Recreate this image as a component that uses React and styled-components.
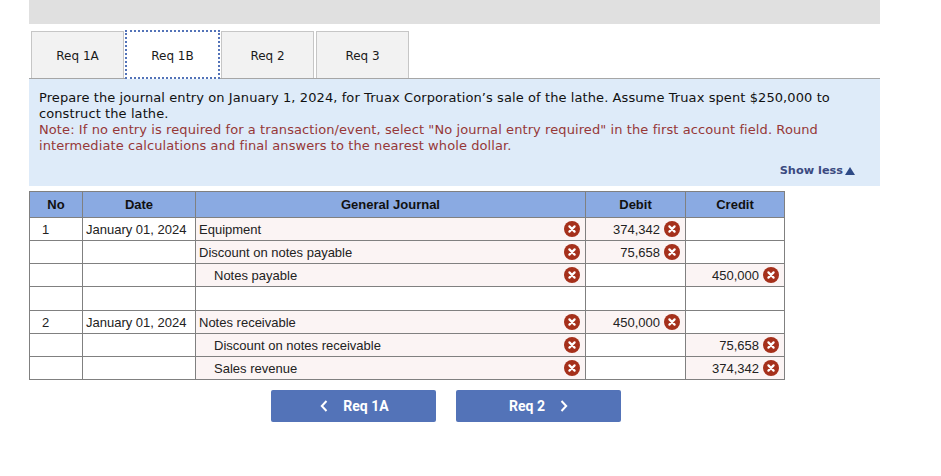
import React from "react"
import styled, { createGlobalStyle } from "styled-components"

const GlobalStyle = createGlobalStyle`
  html, body {
    margin: 0;
    padding: 0;
    background: #fff;
  }
`

const tabs = ["Req 1A", "Req 1B", "Req 2", "Req 3"]

const rows = [
  { no: "1", date: "January 01, 2024", account: "Equipment", debit: "374,342" },
  { account: "Discount on notes payable", debit: "75,658" },
  { account: "Notes payable", indent: true, credit: "450,000" },
  { blank: true },
  { no: "2", date: "January 01, 2024", account: "Notes receivable", debit: "450,000" },
  { account: "Discount on notes receivable", indent: true, credit: "75,658" },
  { account: "Sales revenue", indent: true, credit: "374,342" },
]

const CrossIcon = () => (
  <Cross viewBox="0 0 16 16" aria-hidden="true">
    <circle cx="8" cy="8" r="8" fill="#a5301b" />
    <path d="M5.4 5.4l5.2 5.2M10.6 5.4l-5.2 5.2" stroke="#fff" strokeWidth="2.2" strokeLinecap="round" />
  </Cross>
)

const Amount = ({ value }) => (
  <AmountCell $filled={!!value}>
    {value && (
      <AmountInner>
        {value}
        <CrossIcon />
      </AmountInner>
    )}
  </AmountCell>
)

export default function App() {
  return (
    <Page>
      <GlobalStyle />
      <TopBar />
      <TabRow>
        {tabs.map((tab) => (
          <Tab key={tab} $active={tab === "Req 1B"}>
            {tab}
          </Tab>
        ))}
      </TabRow>
      <Panel>
        <Prompt>
          Prepare the journal entry on January 1, 2024, for Truax Corporation’s sale of the lathe. Assume Truax spent
          $250,000 to construct the lathe.
        </Prompt>
        <Note>
          Note: If no entry is required for a transaction/event, select "No journal entry required" in the first account
          field. Round intermediate calculations and final answers to the nearest whole dollar.
        </Note>
        <ShowLess>
          Show less
          <Triangle viewBox="0 0 10 8" aria-hidden="true">
            <path d="M5 0l5 8H0z" fill="#2e4a86" />
          </Triangle>
        </ShowLess>
      </Panel>
      <Journal>
        <colgroup>
          <col width="53" />
          <col width="113" />
          <col width="390" />
          <col width="100" />
          <col width="99" />
        </colgroup>
        <thead>
          <tr>
            <Head>No</Head>
            <Head>Date</Head>
            <Head>General Journal</Head>
            <Head>Debit</Head>
            <Head>Credit</Head>
          </tr>
        </thead>
        <tbody>
          {rows.map((row, i) => (
            <Row key={i} $blank={row.blank}>
              <NoCell>{row.no}</NoCell>
              <DateCell>{row.date}</DateCell>
              <AccountCell $filled={!row.blank}>
                {!row.blank && (
                  <AccountInner>
                    <AccountName $indent={row.indent}>{row.account}</AccountName>
                    <CrossIcon />
                  </AccountInner>
                )}
              </AccountCell>
              <Amount value={row.debit} />
              <Amount value={row.credit} />
            </Row>
          ))}
        </tbody>
      </Journal>
      <NavRow>
        <NavButton $back>
          <Chevron viewBox="0 0 8 12" aria-hidden="true">
            <path d="M6.5 1L1.8 6l4.7 5" />
          </Chevron>
          Req 1A
        </NavButton>
        <NavButton>
          Req 2
          <Chevron viewBox="0 0 8 12" aria-hidden="true">
            <path d="M1.5 1l4.7 5-4.7 5" />
          </Chevron>
        </NavButton>
      </NavRow>
    </Page>
  )
}

const Page = styled.div`
  width: 851px;
  height: 476px;
  margin-left: 29px;
  overflow: hidden;
`

const TopBar = styled.div`
  height: 24px;
  background: #e0e0e0;
`

const TabRow = styled.div`
  display: flex;
  gap: 2px;
  height: 47px;
  margin-top: 7px;
  padding-left: 2px;
  border-bottom: 1px solid #a6a6a6;
`

const Tab = styled.div`
  box-sizing: border-box;
  width: ${(p) => (p.$active ? "95px" : "93px")};
  margin: ${(p) => (p.$active ? "-1px" : "0")};
  height: ${(p) => (p.$active ? "49px" : "47px")};
  padding-top: ${(p) => (p.$active ? "2px" : "1px")};
  display: flex;
  align-items: center;
  justify-content: center;
  font: 12px "DejaVu Sans", Verdana, sans-serif;
  color: #1a1a1a;
  background: ${(p) => (p.$active ? "#fff" : "#f2f2f2")};
  border: ${(p) => (p.$active ? "2px dotted #5373b8" : "1px solid #c6c6c6")};
  border-bottom: ${(p) => (p.$active ? "2px dotted #5373b8" : "none")};
`

const Panel = styled.div`
  height: 107px;
  box-sizing: border-box;
  padding: 11px 10px 0;
  background: #deebf9;
  font: 13px/16px "DejaVu Sans", Verdana, sans-serif;
  letter-spacing: 0.09px;
  position: relative;
`

const Prompt = styled.div`
  color: #111;
`

const Note = styled.div`
  color: #963838;
`

const ShowLess = styled.div`
  position: absolute;
  right: 25px;
  bottom: 9px;
  display: flex;
  align-items: center;
  gap: 2px;
  font: bold 11.3px "DejaVu Sans", Verdana, sans-serif;
  letter-spacing: 0;
  color: #3b4a80;
`

const Triangle = styled.svg`
  width: 10px;
  height: 8px;
`

const Journal = styled.table`
  width: 755px;
  margin-top: 5px;
  table-layout: fixed;
  border-collapse: collapse;
  font: 13px "Liberation Sans", Arial, sans-serif;
  color: #222;
`

const cell = `
  border: 1px solid #808080;
  padding: 0;
`

const Head = styled.th`
  ${cell}
  box-sizing: border-box;
  height: 26px;
  padding-bottom: 1px;
  background: #8aaae2;
  color: #111;
  font-weight: bold;
  text-align: center;
`

const Row = styled.tr`
  height: ${(p) => (p.$blank ? "24px" : "23px")};
`

const NoCell = styled.td`
  ${cell}
  padding-left: 12px;
`

const DateCell = styled.td`
  ${cell}
  padding-left: 3px;
`

const AccountCell = styled.td`
  ${cell}
  background: ${(p) => (p.$filled ? "#fbf4f4" : "#fff")};
`

const AccountInner = styled.div`
  display: flex;
  align-items: center;
  justify-content: space-between;
  padding: 0 5px 0 3px;
`

const AccountName = styled.span`
  padding-left: ${(p) => (p.$indent ? "15px" : "0")};
`

const AmountCell = styled.td`
  ${cell}
  background: ${(p) => (p.$filled ? "#fbf4f4" : "#fff")};
`

const AmountInner = styled.div`
  display: flex;
  align-items: center;
  justify-content: flex-end;
  gap: 4px;
  padding-right: 5px;
`

const Cross = styled.svg`
  width: 16px;
  height: 16px;
  flex: none;
`

const NavRow = styled.div`
  display: flex;
  gap: 20px;
  margin-top: 10px;
  padding-left: 242px;
`

const NavButton = styled.div`
  box-sizing: border-box;
  width: 165px;
  height: 32px;
  display: flex;
  align-items: center;
  justify-content: center;
  gap: 15px;
  padding-left: ${(p) => (p.$back ? "2px" : "0")};
  border-radius: 2px;
  background: #5373b8;
  color: #fff;
  font: bold 14px Roboto, sans-serif;
`

const Chevron = styled.svg`
  width: 8px;
  height: 12px;
  fill: none;
  stroke: #fff;
  stroke-width: 2;
`
